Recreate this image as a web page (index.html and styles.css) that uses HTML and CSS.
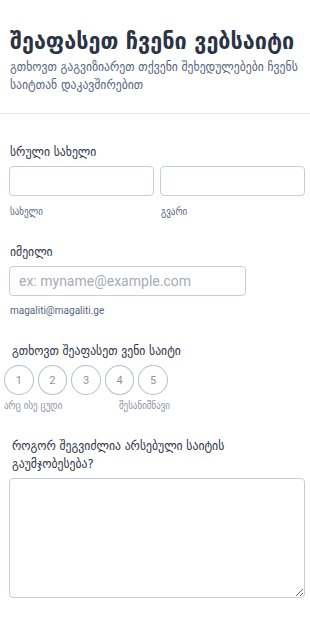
FILE: index.html
```html
<!DOCTYPE html>
<html lang="ka">
<head>
<meta charset="utf-8">
<title>შეაფასეთ ჩვენი ვებსაიტი</title>
<link rel="stylesheet" href="styles.css">
</head>
<body>
<div class="page">
  <header class="header">
    <h1 class="title">შეაფასეთ ჩვენი ვებსაიტი</h1>
    <p class="subtitle">გთხოვთ გაგვიზიარეთ თქვენი შეხედულებები ჩვენს საიტთან დაკავშირებით</p>
  </header>
  <form class="form">
    <div class="field field-name">
      <div class="label">სრული სახელი</div>
      <div class="name-row">
        <div class="name-col">
          <input class="input" type="text">
          <div class="sublabel">სახელი</div>
        </div>
        <div class="name-col">
          <input class="input" type="text">
          <div class="sublabel">გვარი</div>
        </div>
      </div>
    </div>
    <div class="field field-email">
      <div class="label">იმეილი</div>
      <input class="input input-email" type="text" placeholder="ex: myname@example.com">
      <div class="helper">magaliti@magaliti.ge</div>
    </div>
    <div class="field field-rating">
      <div class="label label-indent">გთხოვთ შეაფასეთ ვენი საიტი</div>
      <div class="rating">
        <div class="circles">
          <span class="circle">1</span>
          <span class="circle">2</span>
          <span class="circle">3</span>
          <span class="circle">4</span>
          <span class="circle">5</span>
        </div>
        <div class="rating-labels">
          <span>არც ისე ცუდი</span>
          <span>შესანიშნავი</span>
        </div>
      </div>
    </div>
    <div class="field field-text">
      <div class="label label-indent">როგორ შეგვიძლია არსებული საიტის გაუმჯობესება?</div>
      <textarea class="textarea"></textarea>
    </div>
  </form>
</div>
</body>
</html>
```
FILE: styles.css
```css
* { box-sizing: border-box; }
html, body { margin: 0; padding: 0; background: #fff; }
body {
  font-family: "DejaVu Sans Condensed", "DejaVu Sans", sans-serif;
  color: #2c3345;
  width: 310px;
}
.header {
  padding: 25px 10px 19px 10px;
  border-bottom: 1px solid #e3e5e9;
}
.title {
  margin: 0;
  font-size: 24px;
  line-height: 32px;
  font-weight: 700;
  color: #2c3345;
  white-space: nowrap;
}
.subtitle {
  margin: 1px 0 0;
  font-size: 13px;
  line-height: 18px;
  color: #57647e;
}
.form {
  padding: 29px 5px 0 9px;
}
.field { margin-bottom: 25px; }
.field:last-child { margin-bottom: 10px; }
.label {
  font-size: 13px;
  line-height: 18px;
  color: #2c3345;
  margin: 0 0 5px 1px;
}
.label-indent { margin-left: 3px; }
.name-row {
  display: flex;
  gap: 6px;
}
.name-col { flex: 1; }
.input {
  display: block;
  width: 100%;
  height: 30px;
  border: 1px solid #c8cdd8;
  border-radius: 4px;
  padding: 0 9px;
  font-family: Roboto, "Liberation Sans", sans-serif;
  font-size: 14px;
  background: #fff;
}
.input::placeholder { color: #a6abb8; }
.input-email { width: 237px; }
.sublabel, .helper {
  font-size: 10px;
  line-height: 12px;
  color: #57647e;
  margin-top: 10px;
}
.helper { font-family: Roboto, "Liberation Sans", sans-serif; margin-left: 1px; margin-top: 9px; }
.field-name .sublabel { margin-left: 1px; }
.rating { margin-left: -5px; width: 164px; }
.circles {
  display: flex;
  gap: 4px;
}
.circle {
  width: 30px;
  height: 30px;
  border: 1px solid #b8bdc9;
  border-radius: 50%;
  display: flex;
  align-items: center;
  justify-content: center;
  font-family: Roboto, "Liberation Sans", sans-serif;
  font-size: 11px;
  color: #8d93a4;
}
.rating-labels {
  display: flex;
  justify-content: space-between;
  font-size: 10px;
  line-height: 12px;
  color: #8d93a4;
  margin-top: 5px;
  margin-right: -2px;
}
.textarea {
  display: block;
  width: 100%;
  height: 120px;
  border: 1px solid #c8cdd8;
  border-radius: 4px;
  resize: vertical;
  background: #fff;
}
```
